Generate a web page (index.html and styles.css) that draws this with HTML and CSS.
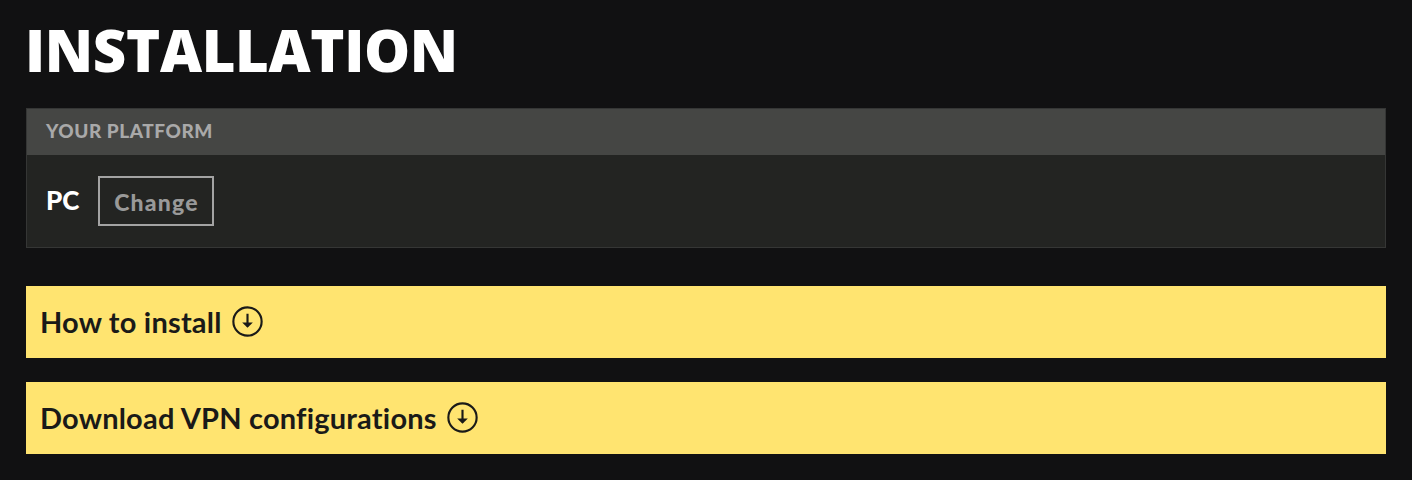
FILE: index.html
```html
<!DOCTYPE html>
<html lang="en">
  <head>
    <meta charset="UTF-8" />
    <title>Installation</title>
    <link rel="stylesheet" href="styles.css">
  </head>
  <body>
    <h1>INSTALLATION</h1>

    <div class="platform-box">
      <div class="platform-header">YOUR PLATFORM</div>
      <div class="platform-body">
        <span class="platform-name">PC</span>
        <a class="change-btn" href="#">Change</a>
      </div>
    </div>

    <div class="accordion">
      <span>How to install</span>
      <svg class="down-icon" viewBox="0 0 32 32">
        <circle cx="16" cy="16" r="14.6" />
        <path class="stem" d="M16 8V21" />
        <path class="head" d="M10.5 17H21.5L16 22.5Z" />
      </svg>
    </div>

    <div class="accordion">
      <span>Download VPN configurations</span>
      <svg class="down-icon" viewBox="0 0 32 32">
        <circle cx="16" cy="16" r="14.6" />
        <path class="stem" d="M16 8V21" />
        <path class="head" d="M10.5 17H21.5L16 22.5Z" />
      </svg>
    </div>
  </body>
</html>
```

FILE: styles.css
```css
body {
  background-color: #111112;
  margin: 0;
  padding: 0 26px;
  font-family: Lato, Arial, sans-serif;
}

h1 {
  margin: 0 0 0 -1px;
  padding-top: 11px;
  height: 97px;
  box-sizing: border-box;
  color: #fff;
  font-family: "Open Sans", Arial, sans-serif;
  font-size: 58px;
  font-weight: 800;
  line-height: 78px;
  letter-spacing: -0.35px;
}

.platform-box {
  height: 140px;
  box-sizing: border-box;
  background-color: #232422;
  border: 1px solid #353635;
  margin-top: 11px;
}

.platform-header {
  height: 46px;
  box-sizing: border-box;
  padding-left: 19px;
  background-color: #454644;
  color: #a9a9a9;
  font-size: 19px;
  font-weight: 900;
  letter-spacing: 0.55px;
  line-height: 44px;
}

.platform-body {
  display: flex;
  align-items: center;
  gap: 19px;
  padding: 21px 0 0 19px;
}

.platform-name {
  color: #fff;
  font-size: 26px;
  font-weight: 900;
  margin-top: -2px;
}

.change-btn {
  display: block;
  width: 116px;
  height: 50px;
  box-sizing: border-box;
  border: 2px solid #a3a3a3;
  color: #999;
  font-size: 23px;
  font-weight: 900;
  letter-spacing: 1.2px;
  line-height: 49px;
  text-align: center;
  text-decoration: none;
}

.accordion {
  display: flex;
  align-items: center;
  gap: 10px;
  height: 72px;
  margin-top: 24px;
  padding-left: 14px;
  padding-bottom: 1px;
  box-sizing: border-box;
  background-color: #ffe470;
  color: #1a1a18;
  font-size: 29px;
  font-weight: 700;
  letter-spacing: 0.2px;
}

.platform-box + .accordion {
  margin-top: 38px;
}

.down-icon {
  width: 31px;
  height: 31px;
  margin-top: -1px;
  fill: none;
  stroke: #1a1a18;
  stroke-width: 2.2;
}

.down-icon .head {
  fill: #1a1a18;
  stroke: none;
}
```
